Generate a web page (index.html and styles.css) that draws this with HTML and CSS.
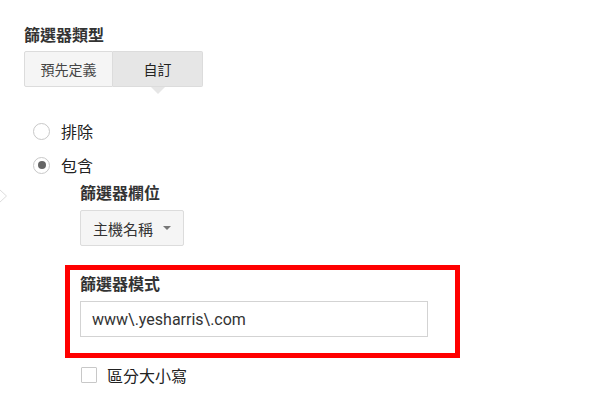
FILE: index.html
```html
<!DOCTYPE html>
<html lang="zh-Hant">
<head>
<meta charset="utf-8">
<title>篩選器</title>
<link rel="stylesheet" href="styles.css">
</head>
<body>
<div class="pointer"><svg width="9" height="14" viewBox="0 0 9 14"><polyline points="0.5,0.5 7.5,7 0.5,13.5" fill="none" stroke="#dcdcdc" stroke-width="1"/></svg></div>
<div class="panel">
  <div class="heading">篩選器類型</div>
  <div class="toggle">
    <div class="tbtn tbtn-first">預先定義</div>
    <div class="tbtn tbtn-on">自訂<span class="notch"></span></div>
  </div>
  <div class="radios">
    <label class="radio-row"><span class="radio"></span><span class="rlabel">排除</span></label>
    <label class="radio-row"><span class="radio radio-on"></span><span class="rlabel">包含</span></label>
  </div>
  <div class="sub">
    <div class="heading">篩選器欄位</div>
    <div class="select"><span class="select-text">主機名稱</span><span class="caret"></span></div>
    <div class="highlight">
      <div class="heading">篩選器模式</div>
      <div class="input">www\.yesharris\.com</div>
    </div>
    <label class="check-row"><span class="check"></span><span class="clabel">區分大小寫</span></label>
  </div>
</div>
</body>
</html>
```
FILE: styles.css
```css
html, body {
  margin: 0;
  padding: 0;
  background: #fff;
}
body {
  font-family: Roboto, "Noto Sans CJK TC", sans-serif;
  color: #222;
  position: relative;
  width: 606px;
  height: 404px;
  overflow: hidden;
}
.pointer {
  position: absolute;
  left: -1px;
  top: 189px;
  line-height: 0;
}
.panel {
  padding: 24px 0 0 24px;
}
.heading {
  font-family: "Noto Sans CJK TC", sans-serif;
  font-weight: 700;
  font-size: 16px;
  line-height: 20px;
  color: #333;
}
.toggle {
  display: flex;
  margin-top: 7px;
}
.tbtn {
  position: relative;
  box-sizing: border-box;
  height: 36px;
  width: 90px;
  display: flex;
  align-items: center;
  justify-content: center;
  font-family: "Noto Sans CJK TC", sans-serif;
  font-size: 14px;
  color: #444;
  background: #f5f5f5;
  border: 1px solid #dcdcdc;
}
.tbtn-first {
  border-radius: 2px 0 0 2px;
  width: 89px;
}
.tbtn-on {
  background: #e6e6e6;
  border-left: none;
  border-radius: 0 2px 2px 0;
  color: #222;
}
.notch {
  position: absolute;
  left: 50%;
  bottom: -8px;
  margin-left: -7px;
  width: 0;
  height: 0;
  border-left: 7px solid transparent;
  border-right: 7px solid transparent;
  border-top: 7px solid #e6e6e6;
}
.radios {
  margin-top: 27px;
  padding-left: 9px;
}
.radio-row {
  display: flex;
  align-items: center;
  height: 34px;
}
.radio {
  box-sizing: border-box;
  width: 17px;
  height: 17px;
  border: 1px solid #c8c8c8;
  border-radius: 50%;
  display: flex;
  align-items: center;
  justify-content: center;
  background: #fff;
}
.radio-on::after {
  content: "";
  width: 8px;
  height: 8px;
  border-radius: 50%;
  background: #666;
}
.rlabel {
  margin-left: 11px;
  font-family: "Noto Sans CJK TC", sans-serif;
  font-size: 16px;
  color: #222;
}
.sub {
  margin-left: 56px;
}
.select {
  box-sizing: border-box;
  margin-top: 8px;
  width: 104px;
  height: 36px;
  display: flex;
  align-items: center;
  justify-content: space-between;
  padding: 0 12px 0 12px;
  background: #f5f5f5;
  border: 1px solid #dcdcdc;
  border-radius: 2px;
}
.select-text {
  font-family: "Noto Sans CJK TC", sans-serif;
  font-size: 15px;
  color: #333;
}
.caret {
  width: 0;
  height: 0;
  border-left: 4px solid transparent;
  border-right: 4px solid transparent;
  border-top: 4px solid #777;
}
.highlight {
  margin-top: 19px;
  margin-left: -15px;
  width: 395px;
  box-sizing: border-box;
  border: 5px solid #ff0000;
  padding: 3px 27px 16px 10px;
}
.input {
  box-sizing: border-box;
  margin-top: 8px;
  width: 348px;
  height: 36px;
  display: flex;
  align-items: center;
  padding-left: 11px;
  border: 1px solid #d3d3d3;
  font-family: Roboto, sans-serif;
  font-size: 16px;
  color: #333;
}
.check-row {
  display: flex;
  align-items: center;
  margin-top: 8px;
  margin-left: 1px;
  height: 17px;
}
.check {
  box-sizing: border-box;
  width: 16px;
  height: 16px;
  border: 1px solid #c8c8c8;
  border-radius: 1px;
  background: #fff;
}
.clabel {
  margin-left: 10px;
  font-family: "Noto Sans CJK TC", sans-serif;
  font-size: 16px;
  color: #222;
}
```
